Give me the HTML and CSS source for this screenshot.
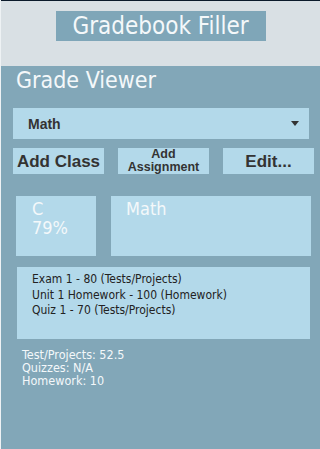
FILE: index.html
```html
<!DOCTYPE html>
<html>
<head>
<meta charset="utf-8">
<link rel="stylesheet" href="styles.css">
</head>
<body>
<div class="page">
  <header class="top">
    <h1 class="title">Gradebook Filler</h1>
  </header>
  <main class="panel">
    <h2 class="heading">Grade Viewer</h2>
    <div class="select">
      <span class="select-text">Math</span>
      <span class="arrow"></span>
    </div>
    <div class="buttons">
      <button class="btn">Add Class</button>
      <button class="btn btn-small">Add<br>Assignment</button>
      <button class="btn">Edit...</button>
    </div>
    <div class="cards">
      <div class="card grade">C<br>79%</div>
      <div class="card course">Math</div>
    </div>
    <div class="list">
      <div>Exam 1 - 80 (Tests/Projects)</div>
      <div>Unit 1 Homework - 100 (Homework)</div>
      <div>Quiz 1 - 70 (Tests/Projects)</div>
    </div>
    <div class="stats">
      <div>Test/Projects: 52.5</div>
      <div>Quizzes: N/A</div>
      <div>Homework: 10</div>
    </div>
  </main>
</div>
</body>
</html>
```

FILE: styles.css
```css
html, body {
  margin: 0;
  padding: 0;
  height: 100%;
}
body {
  background: #eef2f4;
  font-family: "DejaVu Sans", sans-serif;
  font-stretch: condensed;
}
.page {
  margin-left: 1px;
  height: 100%;
  border-top: 1px solid #0b1a2a;
  box-sizing: border-box;
  display: flex;
  flex-direction: column;
}
.top {
  background: #d9e0e4;
  height: 65px;
  display: flex;
  justify-content: center;
  align-items: flex-start;
}
.title {
  margin: 10px 0 0 0;
  background: #7fa6b8;
  color: #f4f8fa;
  font-weight: normal;
  font-size: 24px;
  line-height: 30px;
  height: 30px;
  width: 210px;
  text-align: center;
}
.panel {
  flex: 1;
  background: #82a7b8;
  display: flex;
  flex-direction: column;
  align-items: flex-start;
}
.heading {
  margin: 1px 0 0 15px;
  font-weight: normal;
  font-size: 23px;
  line-height: 26px;
  color: #f4f8fa;
}
.select {
  margin: 15px 0 0 12px;
  width: 296px;
  height: 31px;
  background: #b3d9ea;
  display: flex;
  align-items: center;
  justify-content: space-between;
  box-sizing: border-box;
  padding: 0 10px 0 15px;
}
.select-text {
  font-family: "Liberation Sans", Arial, sans-serif;
  font-weight: bold;
  font-size: 14px;
  color: #333;
}
.arrow {
  width: 0;
  height: 0;
  border-left: 4.5px solid transparent;
  border-right: 4.5px solid transparent;
  border-top: 5px solid #333;
}
.buttons {
  margin: 9px 0 0 12px;
  display: flex;
  gap: 14px;
}
.btn {
  width: 91px;
  height: 26px;
  padding: 0;
  border: none;
  background: #b3d9ea;
  font-family: "Liberation Sans", Arial, sans-serif;
  font-weight: bold;
  font-size: 17px;
  color: #333;
  line-height: 17px;
}
.btn-small {
  font-size: 12.5px;
  line-height: 13px;
}
.cards {
  margin: 22px 0 0 15px;
  display: flex;
  gap: 15px;
}
.card {
  height: 60px;
  background: #b3d9ea;
  color: #f4f8fa;
  font-size: 18px;
  line-height: 19px;
  box-sizing: border-box;
  padding: 3px 0 0 16px;
}
.grade {
  width: 80px;
}
.course {
  width: 200px;
  padding-left: 15px;
}
.list {
  margin: 11px 0 0 16px;
  width: 293px;
  height: 72px;
  background: #b3d9ea;
  color: #222;
  font-size: 12px;
  line-height: 15.5px;
  box-sizing: border-box;
  padding: 5px 0 0 15px;
}
.stats {
  margin: 9px 0 0 21px;
  color: #f4f8fa;
  font-size: 12.5px;
  line-height: 13px;
}
```
